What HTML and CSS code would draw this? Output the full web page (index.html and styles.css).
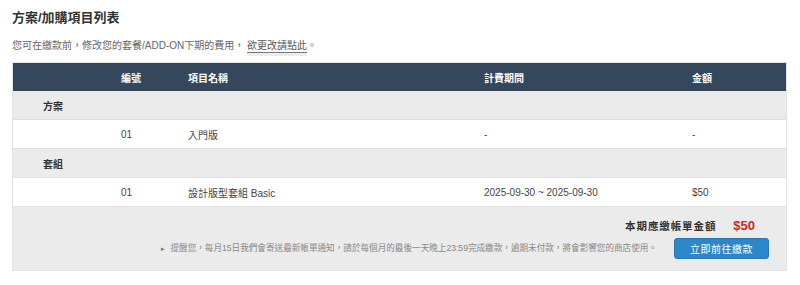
FILE: index.html
```html
<!DOCTYPE html>
<html lang="zh-Hant">
<head>
<meta charset="utf-8">
<link rel="stylesheet" href="styles.css">
</head>
<body>
<div class="page">
  <h1 class="title">方案/加購項目列表</h1>
  <p class="intro">您可在繳款前，修改您的套餐/ADD-ON下期的費用， <a class="link" href="#">欲更改請點此</a>。</p>
  <div class="table">
    <div class="row head">
      <div></div><div>編號</div><div>項目名稱</div><div>計費期間</div><div>金額</div>
    </div>
    <div class="row cat"><div class="cat-label">方案</div></div>
    <div class="row item">
      <div></div><div>01</div><div>入門版</div><div>-</div><div>-</div>
    </div>
    <div class="row cat"><div class="cat-label">套組</div></div>
    <div class="row item">
      <div></div><div>01</div><div>設計版型套組 Basic</div><div>2025-09-30 ~ 2025-09-30</div><div>$50</div>
    </div>
    <div class="footer">
      <div class="total"><span class="total-label">本期應繳帳單金額</span><span class="total-amount">$50</span></div>
      <div class="pay-line">
        <p class="notice"><span class="arrow">▸</span>提醒您，每月15日我們會寄送最新帳單通知，請於每個月的最後一天晚上23:59完成繳款，逾期未付款，將會影響您的商店使用。</p>
        <button class="pay-btn">立即前往繳款</button>
      </div>
    </div>
  </div>
</div>
</body>
</html>
```
FILE: styles.css
```css
* { box-sizing: border-box; }
body {
  margin: 0;
  background: #fff;
  font-family: "Liberation Sans", "Noto Sans CJK TC", sans-serif;
  color: #333;
}
.page { padding: 8px 13px 0 12px; }
.title {
  margin: 0;
  font-size: 13px;
  line-height: 20px;
  font-weight: 700;
  color: #333;
}
.intro {
  margin: 10px 0 8px;
  font-size: 10px;
  line-height: 16px;
  color: #666;
}
.link {
  color: #555;
  text-decoration: none;
  border-bottom: 1px solid #777;
  padding-bottom: 1px;
  box-shadow: 0 3px 0 #ececec;
}
.table {
  width: 775px;
  border: 1px solid #e2e2e2;
  font-size: 10px;
  color: #444;
}
.row {
  display: grid;
  grid-template-columns: 108px 67px 296px 208px 1fr;
  align-items: center;
  height: 29px;
  border-bottom: 1px solid #e0e0e0;
}
.head {
  background: #34475c;
  color: #fff;
  font-weight: 700;
  height: 28px;
  border-bottom: 0;
}
.cat { background: #ebebeb; display: flex; }
.cat-label { padding-left: 30px; font-weight: 700; color: #333; }
.item { background: #fff; }
.footer {
  background: #ebebeb;
  padding: 9px 17px 11px 0;
  display: flex;
  flex-direction: column;
  align-items: flex-end;
  gap: 4px;
}
.total {
  display: flex;
  align-items: center;
  gap: 17px;
  height: 18px;
  padding-right: 14px;
}
.total-label {
  font-size: 10.5px;
  font-weight: 700;
  letter-spacing: 0.9px;
  color: #333;
}
.total-amount {
  font-size: 13px;
  font-weight: 700;
  color: #c8282a;
}
.pay-line {
  display: flex;
  align-items: center;
  gap: 17px;
}
.notice {
  margin: 0;
  font-size: 8.6px;
  color: #888;
  line-height: 12px;
}
.arrow { font-size: 7px; color: #777; margin-right: 5px; }
.pay-btn {
  width: 95px;
  height: 21px;
  padding: 0;
  border: 1px solid #2677b3;
  border-radius: 3px;
  background: #2b87c9;
  color: #fff;
  font-family: inherit;
  font-size: 10px;
  letter-spacing: 0.5px;
}
```
